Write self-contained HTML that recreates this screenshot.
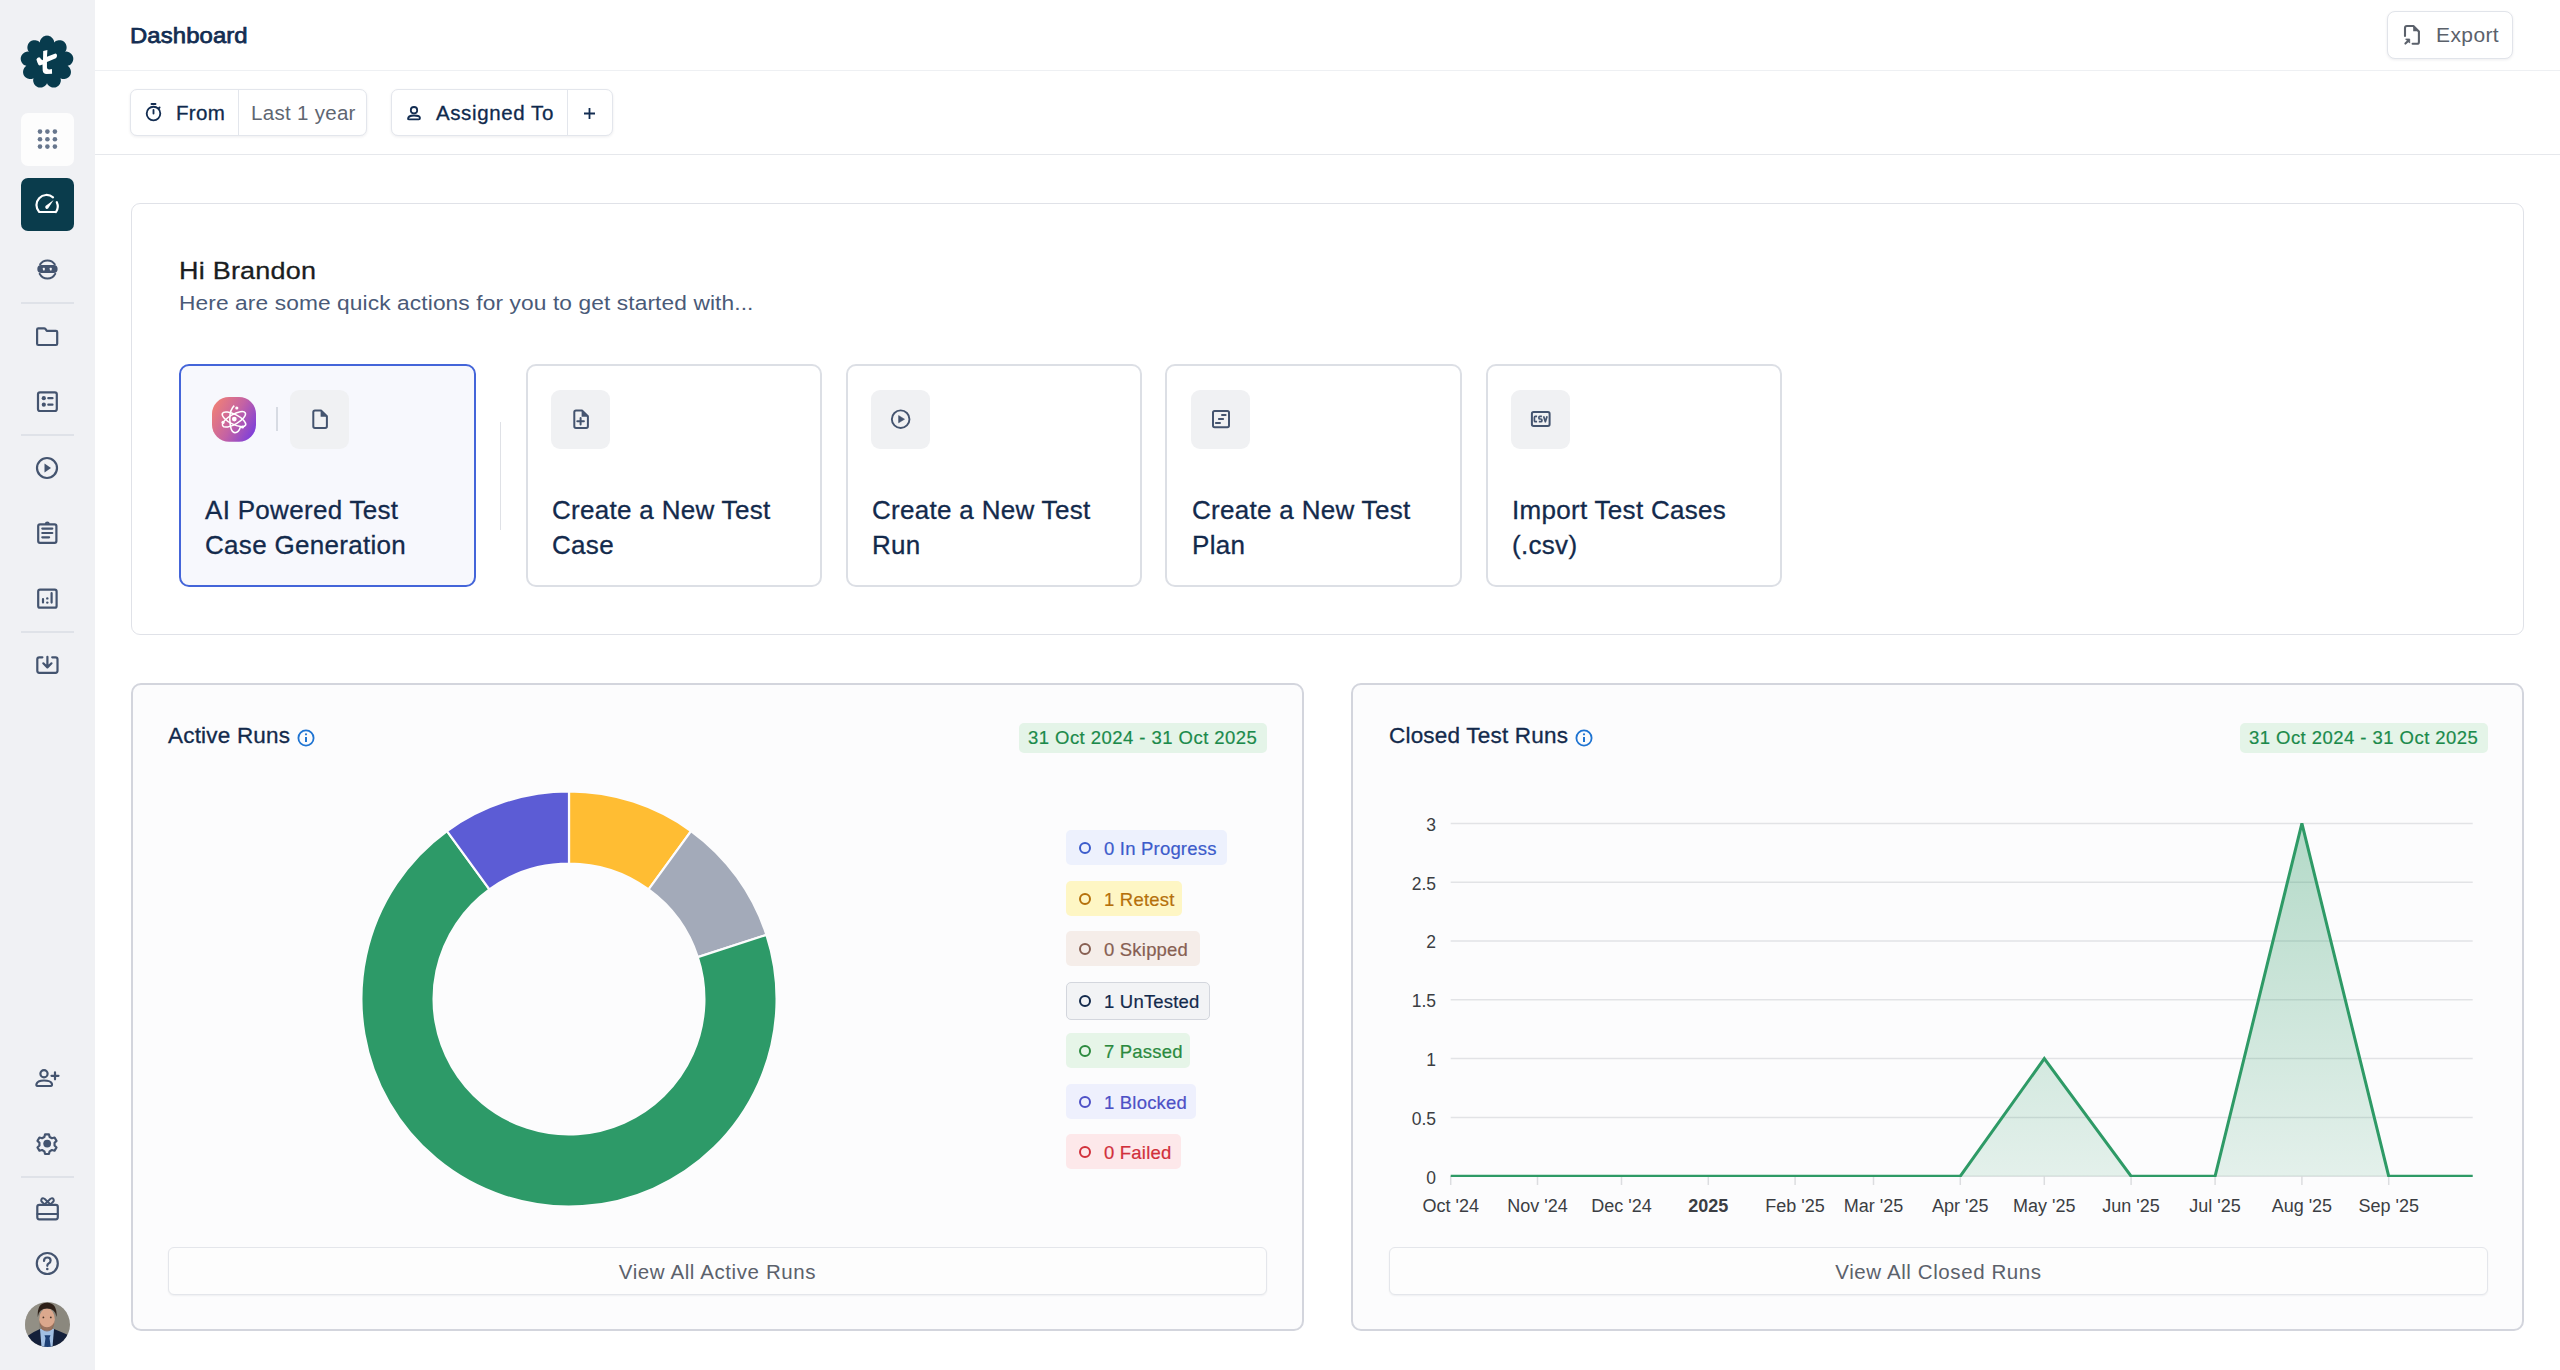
<!DOCTYPE html>
<html><head><meta charset="utf-8">
<style>
*{box-sizing:border-box;margin:0;padding:0}
html,body{width:2560px;height:1370px;overflow:hidden;background:#fff;font-family:"Liberation Sans",sans-serif;}
.abs{position:absolute}
.t{position:absolute;white-space:nowrap;line-height:1}
#side{position:absolute;left:0;top:0;width:95px;height:1370px;background:#f0f1f4}
.sdiv{position:absolute;left:21px;width:53px;height:2px;background:#dfe2e8}
.ico{position:absolute;left:0;width:95px;height:40px}
.hline{position:absolute;left:95px;right:0;height:2px;background:#eef0f3}
.fbox{position:absolute;top:89px;height:47px;border:1px solid #e3e6ec;border-radius:7px;background:#fff;box-shadow:0 1px 3px rgba(20,30,50,.08)}
.card{position:absolute;border:1.8px solid #e0e2e8;border-radius:9px;background:#fdfdfe}
.acard{position:absolute;top:364px;width:296.5px;height:223px;border:2px solid #dcdfe5;border-radius:10px;background:#fff}
.ibox{position:absolute;top:25px;left:24px;width:59px;height:59px;border-radius:9px;background:#f0f1f3}
.atitle{position:absolute;left:24px;top:125px;font-size:26px;line-height:35px;color:#132a4c;letter-spacing:0.3px;-webkit-text-stroke:0.3px #132a4c}
.ccard{position:absolute;top:683px;width:1172px;height:648px;border:2px solid #d3d5dd;border-radius:10px;background:#fcfcfd}
.badge{position:absolute;left:1066px;height:35px;border-radius:5px;font-size:18.5px}
.badge .c{position:absolute;left:13px;top:12px;width:12px;height:12px;border-radius:50%;border:2px solid currentColor}
.badge .tx{position:absolute;left:38px;top:9px;line-height:19px;white-space:nowrap;letter-spacing:0.2px;-webkit-text-stroke:0.2px currentColor}
.vbtn{position:absolute;top:1247px;height:48px;width:1099px;border:1px solid #e4e6eb;border-radius:6px;background:#fdfdfd;box-shadow:0 1px 2px rgba(20,30,50,.06);text-align:center;font-size:20.5px;color:#5b616b;letter-spacing:0.6px}
</style></head>
<body>
<div id="side">
  <svg class="abs" style="left:0;top:0" width="95" height="95" viewBox="0 0 95 95">
    <path fill="#083b4d" d="M47.00,35.60 L47.93,35.66 L48.84,35.86 L49.74,36.18 L50.59,36.62 L51.41,37.19 L52.17,37.88 L52.86,38.70 L53.47,39.65 L53.96,40.77 L54.18,42.47 L55.44,41.31 L56.54,40.77 L57.62,40.43 L58.67,40.25 L59.70,40.21 L60.69,40.30 L61.63,40.51 L62.52,40.84 L63.35,41.28 L64.10,41.82 L64.77,42.47 L65.34,43.20 L65.82,44.02 L66.19,44.92 L66.45,45.88 L66.59,46.89 L66.60,47.96 L66.45,49.08 L66.11,50.26 L65.19,51.70 L66.89,51.62 L68.09,51.92 L69.13,52.35 L70.05,52.89 L70.86,53.51 L71.56,54.22 L72.15,54.99 L72.62,55.81 L72.97,56.68 L73.20,57.58 L73.29,58.50 L73.26,59.44 L73.10,60.37 L72.81,61.30 L72.39,62.20 L71.85,63.07 L71.16,63.89 L70.33,64.65 L69.31,65.34 L67.68,65.85 L69.04,66.88 L69.76,67.88 L70.28,68.88 L70.64,69.88 L70.86,70.89 L70.95,71.88 L70.90,72.84 L70.73,73.78 L70.44,74.67 L70.04,75.50 L69.52,76.27 L68.89,76.97 L68.17,77.58 L67.35,78.10 L66.45,78.52 L65.47,78.83 L64.42,79.03 L63.30,79.08 L62.07,78.94 L60.50,78.29 L60.87,79.95 L60.79,81.18 L60.54,82.28 L60.17,83.28 L59.70,84.19 L59.13,85.00 L58.47,85.72 L57.74,86.32 L56.95,86.82 L56.10,87.20 L55.20,87.45 L54.28,87.58 L53.33,87.59 L52.37,87.46 L51.41,87.21 L50.46,86.82 L49.53,86.29 L48.64,85.60 L47.79,84.71 L47.00,83.20 L46.21,84.71 L45.36,85.60 L44.47,86.29 L43.54,86.82 L42.59,87.21 L41.63,87.46 L40.67,87.59 L39.72,87.58 L38.80,87.45 L37.90,87.20 L37.05,86.82 L36.26,86.32 L35.53,85.72 L34.87,85.00 L34.30,84.19 L33.83,83.28 L33.46,82.28 L33.21,81.18 L33.13,79.95 L33.50,78.29 L31.93,78.94 L30.70,79.08 L29.58,79.03 L28.53,78.83 L27.55,78.52 L26.65,78.10 L25.83,77.58 L25.11,76.97 L24.48,76.27 L23.96,75.50 L23.56,74.67 L23.27,73.78 L23.10,72.84 L23.05,71.88 L23.14,70.89 L23.36,69.88 L23.72,68.88 L24.24,67.88 L24.96,66.88 L26.32,65.85 L24.69,65.34 L23.67,64.65 L22.84,63.89 L22.15,63.07 L21.61,62.20 L21.19,61.30 L20.90,60.37 L20.74,59.44 L20.71,58.50 L20.80,57.58 L21.03,56.68 L21.38,55.81 L21.85,54.99 L22.44,54.22 L23.14,53.51 L23.95,52.89 L24.87,52.35 L25.91,51.92 L27.11,51.62 L28.81,51.70 L27.89,50.26 L27.55,49.08 L27.40,47.96 L27.41,46.89 L27.55,45.88 L27.81,44.92 L28.18,44.02 L28.66,43.20 L29.23,42.47 L29.90,41.82 L30.65,41.28 L31.48,40.84 L32.37,40.51 L33.31,40.30 L34.30,40.21 L35.33,40.25 L36.38,40.43 L37.46,40.77 L38.56,41.31 L39.82,42.47 L40.04,40.77 L40.53,39.65 L41.14,38.70 L41.83,37.88 L42.59,37.19 L43.41,36.62 L44.26,36.18 L45.16,35.86 L46.07,35.66Z"/>
    <path fill="#fff" d="M43.2,51.1 L47.4,50 L46.95,56.7 L55.4,53.6 Q56.8,53.6 57,55.3 Q57.2,57.3 55.8,58.3 L46.95,62.1 L46.95,67.6 Q47.2,69.7 49.2,69.6 L51.9,69.1 L52.1,73.7 L46.5,74 Q43,73.6 42.7,70.5 L42.5,64.6 L39.8,65.6 Q38.2,65.2 37.4,62.5 L36.4,59.6 Q37,57.4 39,57.3 Q40.4,57.5 41,59.2 L43,60.2 Z"/>
  </svg>
  <div class="abs" style="left:21px;top:113px;width:53px;height:53px;border-radius:7px;background:#fdfdfd"></div>
  <svg class="abs" style="left:21px;top:113px" width="53" height="53" viewBox="0 0 53 53"><g fill="#67768d"><circle cx="19" cy="18.6" r="2.3"/><circle cx="26.4" cy="18.6" r="2.3"/><circle cx="33.9" cy="18.6" r="2.3"/><circle cx="19" cy="26.2" r="2.3"/><circle cx="26.4" cy="26.2" r="2.3"/><circle cx="33.9" cy="26.2" r="2.3"/><circle cx="19" cy="33.6" r="2.3"/><circle cx="26.4" cy="33.6" r="2.3"/><circle cx="33.9" cy="33.6" r="2.3"/></g></svg>
  <div class="abs" style="left:21px;top:178px;width:53px;height:53px;border-radius:7px;background:#0a3c4c"></div>
  <svg class="abs" style="left:21px;top:178px" width="53" height="53" viewBox="0 0 53 53"><path d="M35,34 L18.2,34 A10.1,10.1 0 0 1 32,19.3 M35.8,24.2 A10.1,10.1 0 0 1 35,34" fill="none" stroke="#fff" stroke-width="2.2" stroke-linecap="round" stroke-linejoin="round"/><path d="M32.6,22 L27.1,30.5 A1.8,1.8 0 0 1 24.5,28.1 Z" fill="#fff"/></svg>
  <!-- bot -->
  <svg class="ico" style="top:249px" width="95" height="40" viewBox="0 0 95 40"><g fill="none" stroke="#44546f" stroke-width="1.9" stroke-linecap="round"><path d="M40.09,15.4 A8.9,8.9 0 0 1 54.81,15.4 M55.3,24.8 A8.9,8.9 0 0 1 39.6,24.8"/></g>
    <rect x="37.3" y="16.1" width="20.3" height="8" rx="4" fill="#44546f"/>
    <g fill="#f0f1f4"><rect x="42.9" y="18.7" width="1.9" height="2.7" rx="0.6"/><rect x="49.8" y="18.7" width="1.9" height="2.7" rx="0.6"/></g></svg>
  <div class="sdiv" style="top:302px"></div>
  <!-- folder -->
  <svg class="ico" style="top:316px" width="95" height="40" viewBox="0 0 95 40"><path d="M39,12.4 h5 q1,0 1.6,0.8 l1.2,1.7 h9.2 q1.2,0 1.2,1.2 v11.7 q0,1.2 -1.2,1.2 h-17.7 q-1.2,0 -1.2,-1.2 v-14.2 q0,-1.2 1.2,-1.2 Z" fill="none" stroke="#44546f" stroke-width="2.2" stroke-linejoin="round"/></svg>
  <!-- list -->
  <svg class="ico" style="top:381px" width="95" height="40" viewBox="0 0 95 40"><g fill="none" stroke="#44546f" stroke-width="2.2" stroke-linecap="round"><rect x="38" y="11.3" width="18.8" height="18.7" rx="2"/><path d="M48.3,17.2 h4.2 M48.3,23.7 h4.2"/></g><g fill="#44546f"><circle cx="43.8" cy="17.2" r="2.1"/><circle cx="43.8" cy="23.7" r="2.1"/></g></svg>
  <div class="sdiv" style="top:434px"></div>
  <!-- play -->
  <svg class="ico" style="top:448px" width="95" height="40" viewBox="0 0 95 40"><circle cx="47" cy="20" r="10" fill="none" stroke="#44546f" stroke-width="2.2"/><path d="M44.5,15.5 L51,20 L44.5,24.5 Z" fill="#44546f"/></svg>
  <!-- clipboard -->
  <svg class="ico" style="top:512px" width="95" height="40" viewBox="0 0 95 40"><g fill="none" stroke="#44546f" stroke-width="2.2" stroke-linecap="round" stroke-linejoin="round"><rect x="38.2" y="12.3" width="18.2" height="18.6" rx="1.8"/><path d="M46,11.8 a1.3,1.3 0 0 1 2.6,0 M42.3,16.6 h10 M42.3,21 h10 M42.3,25.3 h6.8"/></g></svg>
  <!-- chart -->
  <svg class="ico" style="top:578px" width="95" height="40" viewBox="0 0 95 40"><g fill="none" stroke="#44546f" stroke-width="2.2" stroke-linecap="round"><rect x="38.2" y="11.7" width="18.4" height="18" rx="1.8"/><path d="M43,21.2 v3.2 M51.6,15.2 v9.4"/></g><g fill="#44546f"><circle cx="47.3" cy="20.4" r="1.2"/><circle cx="47.3" cy="24.6" r="1.2"/></g></svg>
  <div class="sdiv" style="top:631px"></div>
  <!-- download -->
  <svg class="ico" style="top:645px" width="95" height="40" viewBox="0 0 95 40"><g fill="none" stroke="#44546f" stroke-width="2.2" stroke-linecap="round" stroke-linejoin="round"><path d="M42.4,12.3 h-3.1 q-2,0 -2,2 v11.5 q0,2 2,2 h16.2 q2,0 2,-2 v-11.5 q0,-2 -2,-2 h-3.3"/><path d="M47.4,11.8 v10.5 M43.3,18.3 l4.1,4.1 l4.1,-4.1"/></g></svg>
  <!-- user plus -->
  <svg class="ico" style="top:1059px" width="95" height="40" viewBox="0 0 95 40"><g fill="none" stroke="#44546f" stroke-width="2.2" stroke-linecap="round" stroke-linejoin="round"><circle cx="44" cy="14.8" r="3.6"/><path d="M37.5,27 Q36,27 36.5,25 Q37.5,21.5 44,21.5 Q50.5,21.5 51.8,24.5 Q52.5,27 50.7,27 Z"/><path d="M55,13.3 v7 M51.5,16.8 h7"/></g></svg>
  <!-- gear -->
  <svg class="ico" style="top:1124px" width="95" height="40" viewBox="0 0 95 40"><g fill="none" stroke="#44546f" stroke-width="2.2" stroke-linejoin="round"><path transform="translate(47 20.5) scale(0.88) translate(-47 -20.5) translate(0 -0.6)" stroke-width="2.5" id="gearp" d="M44.8,9.5 h4.4 l0.8,3 l2.6,1.5 l3,-0.8 l2.2,3.8 l-2.2,2.2 v3 l2.2,2.2 l-2.2,3.8 l-3,-0.8 l-2.6,1.5 l-0.8,3 h-4.4 l-0.8,-3 l-2.6,-1.5 l-3,0.8 l-2.2,-3.8 l2.2,-2.2 v-3 l-2.2,-2.2 l2.2,-3.8 l3,0.8 l2.6,-1.5 Z"/></g><circle cx="47.2" cy="19.6" r="3.9" fill="#44546f"/></svg>
  <div class="sdiv" style="top:1176px"></div>
  <!-- gift -->
  <svg class="ico" style="top:1190px" width="95" height="40" viewBox="0 0 95 40"><g fill="none" stroke="#44546f" stroke-width="2.2" stroke-linecap="round" stroke-linejoin="round"><rect x="37.3" y="14.8" width="20.5" height="14.5" rx="2"/><path d="M37.5,24 h20"/></g><g fill="none" stroke="#44546f" stroke-width="1.9" stroke-linecap="round" stroke-linejoin="round"><path d="M44.5,14.5 L50.5,8.8 Q52.5,7.6 53.6,9.3 Q54.4,11.2 52.2,12.6 L50.5,14.5 M50.5,14.5 L44.5,8.8 Q42.5,7.6 41.4,9.3 Q40.6,11.2 42.8,12.6 L44.5,14.5"/></g></svg>
  <!-- help -->
  <svg class="ico" style="top:1243px" width="95" height="40" viewBox="0 0 95 40"><g fill="none" stroke="#44546f" stroke-width="2.2" stroke-linecap="round"><circle cx="47.3" cy="20.5" r="10.5"/><path d="M44,18 q0,-3.5 3.3,-3.5 q3.3,0 3.3,3 q0,2 -2,3 q-1.3,0.7 -1.3,2.3"/></g><circle cx="47.3" cy="26" r="1.3" fill="#44546f"/></svg>
  <!-- avatar -->
  <svg class="abs" style="left:25px;top:1302px" width="45" height="45" viewBox="0 0 45 45">
    <defs><clipPath id="avc"><circle cx="22.5" cy="22.5" r="22.5"/></clipPath></defs>
    <g clip-path="url(#avc)">
      <rect width="45" height="45" fill="#8b887e"/>
      <rect x="0" y="0" width="14" height="45" fill="#98958b" opacity="0.6"/>
      <path d="M0,45 L0,35 L3.2,33.5 Q10,29 15,27 L29,27 Q35,29.5 42,32.4 L45,34 L45,45 Z" fill="#14203a"/>
      <path d="M15,27 L29,27 L27.5,45 L16.5,45 Z" fill="#a2bfe2"/>
      <path d="M19.5,33.3 L25.5,33.3 L24.5,36 L25.8,45 L19.2,45 L20.5,36 Z" fill="#1d3f74"/>
      <rect x="17" y="23" width="10" height="5" fill="#c4927a"/>
      <ellipse cx="22" cy="17.3" rx="7.8" ry="11" fill="#dba88d"/>
      <path d="M14.4,18.5 Q14.8,29.3 22,29.5 Q29.2,29.3 29.6,18.5 Q28.3,24.8 22,25.2 Q15.7,24.8 14.4,18.5 Z" fill="#86624f" opacity="0.75"/>
      <path d="M12.8,15 Q11.8,0.6 22,0.7 Q32.2,0.6 31.6,15 Q30.5,6.8 22,6.6 Q13.6,6.8 12.8,15 Z" fill="#2e2018"/>
      <circle cx="18.4" cy="15.4" r="0.9" fill="#4a352a"/><circle cx="25.8" cy="15.4" r="0.9" fill="#4a352a"/>
    </g>
  </svg>
</div>

<!-- header -->
<div class="t" style="left:129.8px;top:24.5px;font-size:22px;color:#132d52;-webkit-text-stroke:0.75px #132d52;transform:scaleX(1.085);transform-origin:0 0;letter-spacing:0.1px">Dashboard</div>
<div class="hline" style="top:69.5px;height:1.5px"></div>
<div class="abs" style="left:2387px;top:11px;width:126px;height:48px;border:1px solid #e1e4ea;border-radius:8px;background:#fff;box-shadow:0 1px 3px rgba(20,30,50,.08)"></div>
<svg class="abs" style="left:2400px;top:20px" width="26" height="30" viewBox="0 0 26 30"><g fill="none" stroke="#5b616b" stroke-width="2.1" stroke-linejoin="round" stroke-linecap="round"><path d="M5,16 V7.9 q0,-1.9 1.9,-1.9 h6.5 l5.5,5.5 v10.4 q0,1.9 -1.9,1.9 h-4.4"/><path d="M5.4,23.6 L8.6,20.4"/></g><path d="M13.2,6 v5.3 h5.5 Z" fill="#5b616b"/><path d="M5.6,19 h4.1 v4.1 Z" fill="#5b616b" stroke="#5b616b" stroke-width="0.8" stroke-linejoin="round"/></svg>
<div class="t" style="left:2436px;top:23.5px;font-size:21px;color:#5b616b;letter-spacing:0.4px">Export</div>

<!-- filters -->
<div class="fbox" style="left:130px;width:237px"></div>
<div class="abs" style="left:238px;top:90px;width:1px;height:45px;background:#e3e6ec"></div>
<svg class="abs" style="left:143px;top:100px" width="22" height="24" viewBox="0 0 22 24"><g fill="none" stroke="#132d52" stroke-width="1.85" stroke-linecap="round"><circle cx="10.5" cy="13.5" r="6.8"/><path d="M10.5,10 v3.5 M8.5,4 h4 M15.3,8.7 L16.6,7.5"/></g></svg>
<div class="t" style="left:176px;top:103px;font-size:20.5px;color:#0f2a4d;letter-spacing:0.3px;-webkit-text-stroke:0.3px #0f2a4d">From</div>
<div class="t" style="left:251px;top:103px;font-size:20.5px;color:#5f6671;letter-spacing:0.3px">Last 1 year</div>
<div class="fbox" style="left:391px;width:222px"></div>
<div class="abs" style="left:567px;top:90px;width:1px;height:45px;background:#e3e6ec"></div>
<svg class="abs" style="left:403px;top:102px" width="22" height="22" viewBox="0 0 22 22"><g fill="none" stroke="#132d52" stroke-width="1.8"><circle cx="11" cy="8.2" r="3.2"/><path d="M5,17 Q5,13.5 11,13.5 Q17,13.5 17,16 Q17,17.3 15.7,17.3 H6.3 Q5,17.3 5,17 Z"/></g></svg>
<div class="t" style="left:436px;top:103px;font-size:20.5px;color:#0f2a4d;letter-spacing:0.6px;-webkit-text-stroke:0.3px #0f2a4d">Assigned To</div>
<svg class="abs" style="left:581px;top:105px" width="17" height="17" viewBox="0 0 17 17"><path d="M8.5,3 v11 M3,8.5 h11" stroke="#132d52" stroke-width="1.8"/></svg>
<div class="hline" style="top:153.8px;height:1.5px;background:#e6e8ec"></div>

<!-- welcome card -->
<div class="card" style="left:131px;top:202.8px;width:2393px;height:432px;background:#fff"></div>
<div class="t" style="left:178.5px;top:259px;font-size:24.5px;color:#1a1d21;letter-spacing:0.2px;transform:scaleX(1.102);transform-origin:0 0;-webkit-text-stroke:0.3px #1a1d21">Hi Brandon</div>
<div class="t" style="left:178.5px;top:292.5px;font-size:20.5px;color:#4a5a78;letter-spacing:0.1px;transform:scaleX(1.108);transform-origin:0 0">Here are some quick actions for you to get started with...</div>


<!-- action cards -->
<div class="acard" style="left:179px;width:297px;background:#f7f8fd;border:2.2px solid #4465d9"></div>
<svg class="abs" style="left:211px;top:396px" width="46" height="47" viewBox="0 0 46 47">
  <defs><linearGradient id="aig" x1="0" y1="0.25" x2="1" y2="0.8"><stop offset="0" stop-color="#ee7f78"/><stop offset="0.5" stop-color="#c462a4"/><stop offset="1" stop-color="#7a3ddd"/></linearGradient></defs>
  <rect x="1" y="1" width="44" height="44.7" rx="17" fill="url(#aig)"/>
  <g fill="none" stroke="#fff" stroke-width="1.5">
    <ellipse cx="23" cy="23.3" rx="13" ry="4.9" transform="rotate(27 23 23.3)"/>
    <ellipse cx="23" cy="23.3" rx="13" ry="4.9" transform="rotate(-30 23 23.3)"/>
    <path d="M23.3,9.6 Q18.6,13.5 18.8,23.5 Q19.3,36.6 24,36.8 Q27.8,36.6 29.6,30.5"/>
  </g>
  <circle cx="23.3" cy="23.1" r="2.4" fill="#fff"/>
  <circle cx="25.8" cy="12" r="1.6" fill="#fff"/><circle cx="12" cy="26.4" r="1.6" fill="#fff"/><circle cx="31.5" cy="31" r="1.6" fill="#fff"/>
</svg>
<div class="abs" style="left:276px;top:407px;width:1.5px;height:24px;background:#d7dbe3"></div>
<div class="abs" style="left:290px;top:390px;width:59px;height:59px;border-radius:9px;background:#f0f1f3"></div>
<svg class="abs" style="left:306px;top:405px" width="28" height="28" viewBox="0 0 28 28"><path d="M9,5.4 h6 l5.9,5.9 v10 q0,1.7 -1.7,1.7 h-10.2 q-1.7,0 -1.7,-1.7 v-14.2 q0,-1.7 1.7,-1.7 Z" fill="none" stroke="#44546f" stroke-width="2" stroke-linejoin="round"/><path d="M14.6,5.4 v6.3 h6.3 Z" fill="#44546f"/></svg>
<div class="atitle" style="left:205px;top:492.8px">AI Powered Test<br>Case Generation</div>
<div class="abs" style="left:500px;top:421.5px;width:1.2px;height:108.5px;background:#dfe1e6"></div>

<div class="acard" style="left:525.8px"></div>
<div class="abs" style="left:551px;top:390px;width:59px;height:59px;border-radius:9px;background:#f0f1f3"></div>
<svg class="abs" style="left:567px;top:405px" width="28" height="28" viewBox="0 0 28 28"><g fill="none" stroke="#44546f" stroke-width="2" stroke-linejoin="round"><path d="M9,5.4 h6 l5.9,5.9 v10 q0,1.7 -1.7,1.7 h-10.2 q-1.7,0 -1.7,-1.7 v-14.2 q0,-1.7 1.7,-1.7 Z"/><path d="M13.6,13 v6.6 M10.3,16.3 h6.6" stroke-linecap="round"/></g><path d="M14.6,5.4 v6.3 h6.3 Z" fill="#44546f"/></svg>
<div class="atitle" style="left:552px;top:492.8px">Create a New Test<br>Case</div>

<div class="acard" style="left:845.5px"></div>
<div class="abs" style="left:871px;top:390px;width:59px;height:59px;border-radius:9px;background:#f0f1f3"></div>
<svg class="abs" style="left:886px;top:405px" width="28" height="28" viewBox="0 0 28 28"><circle cx="14.66" cy="14.2" r="8.8" fill="none" stroke="#44546f" stroke-width="1.9"/><path d="M12.6,10.6 L18.5,14.2 L12.6,17.8 Z" fill="#44546f" stroke="#44546f" stroke-width="0.6" stroke-linejoin="round"/></svg>
<div class="atitle" style="left:872px;top:492.8px">Create a New Test<br>Run</div>

<div class="acard" style="left:1165.3px"></div>
<div class="abs" style="left:1191px;top:390px;width:59px;height:59px;border-radius:9px;background:#f0f1f3"></div>
<svg class="abs" style="left:1206px;top:405px" width="28" height="28" viewBox="0 0 28 28"><g fill="none" stroke="#44546f" stroke-width="2" stroke-linecap="round"><rect x="7" y="6" width="16" height="16.2" rx="1.6"/><path d="M16,10.1 h3.6 M12.9,14.1 h4.2 M9.9,18 h4.1"/></g></svg>
<div class="atitle" style="left:1192px;top:492.8px">Create a New Test<br>Plan</div>

<div class="acard" style="left:1485.5px"></div>
<div class="abs" style="left:1511px;top:390px;width:59px;height:59px;border-radius:9px;background:#f0f1f3"></div>
<svg class="abs" style="left:1526px;top:405px" width="28" height="28" viewBox="0 0 28 28"><g fill="none" stroke="#44546f" stroke-linejoin="round"><rect x="5.9" y="7.1" width="17.7" height="13.8" rx="1.7" stroke-width="2"/><path stroke-width="1.7" d="M11.1,11.4 h-1.7 q-1,0 -1,1 v3.3 q0,1 1,1 h1.7 M15.9,11.4 h-2 q-1,0 -1,1 v0.6 q0,1 1,1 h1 q1,0 1,1 v0.7 q0,1 -1,1 h-2.1 M17.6,11.3 l1.75,5.5 l1.75,-5.5"/></g></svg>
<div class="atitle" style="left:1512px;top:492.8px">Import Test Cases<br>(.csv)</div>


<!-- chart cards -->
<div class="ccard" style="left:131px;width:1173px"></div>
<div class="t" style="left:168px;top:725px;font-size:22.5px;color:#132a4c;letter-spacing:0.2px;-webkit-text-stroke:0.3px #132a4c">Active Runs</div>
<svg class="abs" style="left:296px;top:727.7px" width="20" height="20" viewBox="0 0 20 20"><circle cx="10" cy="10" r="7.6" fill="none" stroke="#1f74d2" stroke-width="1.8"/><path d="M10,9 v5" stroke="#1f74d2" stroke-width="2"/><circle cx="10" cy="6.3" r="1.1" fill="#1f74d2"/></svg>
<div class="abs" style="left:1019px;top:723px;width:248px;height:30px;border-radius:5px;background:#e4f4e8"></div>
<div class="t" style="left:1028px;top:729px;font-size:18.5px;color:#1b8a4b;letter-spacing:0.45px;-webkit-text-stroke:0.2px #1b8a4b">31 Oct 2024 - 31 Oct 2025</div>
<svg class="abs" style="left:0;top:0" width="1300" height="1370" viewBox="0 0 1300 1370"><path d="M569.00,791.40 A207.6,207.6 0 0 1 691.02,831.05 L648.59,889.46 A135.4,135.4 0 0 0 569.00,863.60 Z" fill="#ffbd33" stroke="#fcfcfd" stroke-width="2.2" stroke-linejoin="miter"/><path d="M691.02,831.05 A207.6,207.6 0 0 1 766.44,934.85 L697.77,957.16 A135.4,135.4 0 0 0 648.59,889.46 Z" fill="#a3aab9" stroke="#fcfcfd" stroke-width="2.2" stroke-linejoin="miter"/><path d="M766.44,934.85 A207.6,207.6 0 1 1 446.98,831.05 L489.41,889.46 A135.4,135.4 0 1 0 697.77,957.16 Z" fill="#2d9a68" stroke="#fcfcfd" stroke-width="2.2" stroke-linejoin="miter"/><path d="M446.98,831.05 A207.6,207.6 0 0 1 569.00,791.40 L569.00,863.60 A135.4,135.4 0 0 0 489.41,889.46 Z" fill="#5c5cd5" stroke="#fcfcfd" stroke-width="2.2" stroke-linejoin="miter"/></svg>
<div class="badge" style="top:830px;width:161px;background:#edf1fd;color:#3c5ccb"><span class="c"></span><span class="tx">0 In Progress</span></div>
<div class="badge" style="top:881px;width:116px;background:#fef6c4;color:#b5700b"><span class="c"></span><span class="tx">1 Retest</span></div>
<div class="badge" style="top:931px;width:134px;background:#f5ede9;color:#875f52"><span class="c"></span><span class="tx">0 Skipped</span></div>
<div class="badge" style="top:982px;width:144px;height:38px;background:#f2f3f5;color:#132a4c;border:1.5px solid #d3d6dd"><span class="c" style="left:12px;top:12px"></span><span class="tx" style="left:37px;top:8.5px">1 UnTested</span></div>
<div class="badge" style="top:1033px;width:124px;background:#e6f5e8;color:#2b8a3e"><span class="c"></span><span class="tx">7 Passed</span></div>
<div class="badge" style="top:1084px;width:130px;background:#eef0fd;color:#4d50c6"><span class="c"></span><span class="tx">1 Blocked</span></div>
<div class="badge" style="top:1134px;width:115px;background:#fde8ea;color:#d1303b"><span class="c"></span><span class="tx">0 Failed</span></div>
<div class="vbtn" style="left:168px"><span style="position:absolute;left:0;right:0;top:14px;line-height:20px">View All Active Runs</span></div>

<div class="ccard" style="left:1351px;width:1173px"></div>
<div class="t" style="left:1389px;top:725px;font-size:22.5px;color:#132a4c;letter-spacing:0.2px;-webkit-text-stroke:0.3px #132a4c">Closed Test Runs</div>
<svg class="abs" style="left:1574px;top:727.7px" width="20" height="20" viewBox="0 0 20 20"><circle cx="10" cy="10" r="7.6" fill="none" stroke="#1f74d2" stroke-width="1.8"/><path d="M10,9 v5" stroke="#1f74d2" stroke-width="2"/><circle cx="10" cy="6.3" r="1.1" fill="#1f74d2"/></svg>
<div class="abs" style="left:2240px;top:723px;width:248px;height:30px;border-radius:5px;background:#e4f4e8"></div>
<div class="t" style="left:2249px;top:729px;font-size:18.5px;color:#1b8a4b;letter-spacing:0.45px;-webkit-text-stroke:0.2px #1b8a4b">31 Oct 2024 - 31 Oct 2025</div>
<svg class="abs" style="left:0;top:0" width="2560" height="1370" viewBox="0 0 2560 1370" font-family="Liberation Sans" font-size="18" fill="#3b3e43">
  <defs><clipPath id="lc"><rect x="1400" y="780" width="1100" height="396.9"/></clipPath><linearGradient id="ag" x1="0" y1="823.4" x2="0" y2="1176.2" gradientUnits="userSpaceOnUse"><stop offset="0" stop-color="#2e9a66" stop-opacity="0.35"/><stop offset="1" stop-color="#2e9a66" stop-opacity="0.12"/></linearGradient></defs>
  <line x1="1450.7" x2="2472.7" y1="1176.2" y2="1176.2" stroke="#e2e3e6" stroke-width="1.5"/><line x1="1450.7" x2="2472.7" y1="1117.4" y2="1117.4" stroke="#e2e3e6" stroke-width="1.5"/><line x1="1450.7" x2="2472.7" y1="1058.6" y2="1058.6" stroke="#e2e3e6" stroke-width="1.5"/><line x1="1450.7" x2="2472.7" y1="999.8" y2="999.8" stroke="#e2e3e6" stroke-width="1.5"/><line x1="1450.7" x2="2472.7" y1="941.0" y2="941.0" stroke="#e2e3e6" stroke-width="1.5"/><line x1="1450.7" x2="2472.7" y1="882.2" y2="882.2" stroke="#e2e3e6" stroke-width="1.5"/><line x1="1450.7" x2="2472.7" y1="823.4" y2="823.4" stroke="#e2e3e6" stroke-width="1.5"/><line x1="1450.7" x2="1450.7" y1="1176" y2="1185" stroke="#dcdde0" stroke-width="1.5"/><line x1="1537.5" x2="1537.5" y1="1176" y2="1185" stroke="#dcdde0" stroke-width="1.5"/><line x1="1621.5" x2="1621.5" y1="1176" y2="1185" stroke="#dcdde0" stroke-width="1.5"/><line x1="1708.3" x2="1708.3" y1="1176" y2="1185" stroke="#dcdde0" stroke-width="1.5"/><line x1="1795.1" x2="1795.1" y1="1176" y2="1185" stroke="#dcdde0" stroke-width="1.5"/><line x1="1873.5" x2="1873.5" y1="1176" y2="1185" stroke="#dcdde0" stroke-width="1.5"/><line x1="1960.3" x2="1960.3" y1="1176" y2="1185" stroke="#dcdde0" stroke-width="1.5"/><line x1="2044.3" x2="2044.3" y1="1176" y2="1185" stroke="#dcdde0" stroke-width="1.5"/><line x1="2131.1" x2="2131.1" y1="1176" y2="1185" stroke="#dcdde0" stroke-width="1.5"/><line x1="2215.1" x2="2215.1" y1="1176" y2="1185" stroke="#dcdde0" stroke-width="1.5"/><line x1="2301.9" x2="2301.9" y1="1176" y2="1185" stroke="#dcdde0" stroke-width="1.5"/><line x1="2388.7" x2="2388.7" y1="1176" y2="1185" stroke="#dcdde0" stroke-width="1.5"/>
  <path clip-path="url(#lc)" d="M1450.7,1176.2 L1537.5,1176.2 L1621.5,1176.2 L1708.3,1176.2 L1795.1,1176.2 L1873.5,1176.2 L1960.3,1176.2 L2044.3,1058.6 L2131.1,1176.2 L2215.1,1176.2 L2301.9,823.4 L2388.7,1176.2 L2472.7,1176.2 L2472.7,1176.2 L1450.7,1176.2 Z" fill="url(#ag)"/>
  <path clip-path="url(#lc)" d="M1450.7,1176.2 L1537.5,1176.2 L1621.5,1176.2 L1708.3,1176.2 L1795.1,1176.2 L1873.5,1176.2 L1960.3,1176.2 L2044.3,1058.6 L2131.1,1176.2 L2215.1,1176.2 L2301.9,823.4 L2388.7,1176.2 L2472.7,1176.2" fill="none" stroke="#2e9a66" stroke-width="3" stroke-linejoin="miter"/>
  <text x="1436" y="1183.5" text-anchor="end" font-size="17.5">0</text><text x="1436" y="1124.7" text-anchor="end" font-size="17.5">0.5</text><text x="1436" y="1065.9" text-anchor="end" font-size="17.5">1</text><text x="1436" y="1007.1" text-anchor="end" font-size="17.5">1.5</text><text x="1436" y="948.3" text-anchor="end" font-size="17.5">2</text><text x="1436" y="889.5" text-anchor="end" font-size="17.5">2.5</text><text x="1436" y="830.7" text-anchor="end" font-size="17.5">3</text><text x="1450.7" y="1212" text-anchor="middle">Oct &#39;24</text><text x="1537.5" y="1212" text-anchor="middle">Nov &#39;24</text><text x="1621.5" y="1212" text-anchor="middle">Dec &#39;24</text><text x="1708.3" y="1212" text-anchor="middle" font-weight="700">2025</text><text x="1795.1" y="1212" text-anchor="middle">Feb &#39;25</text><text x="1873.5" y="1212" text-anchor="middle">Mar &#39;25</text><text x="1960.3" y="1212" text-anchor="middle">Apr &#39;25</text><text x="2044.3" y="1212" text-anchor="middle">May &#39;25</text><text x="2131.1" y="1212" text-anchor="middle">Jun &#39;25</text><text x="2215.1" y="1212" text-anchor="middle">Jul &#39;25</text><text x="2301.9" y="1212" text-anchor="middle">Aug &#39;25</text><text x="2388.7" y="1212" text-anchor="middle">Sep &#39;25</text>
</svg>
<div class="vbtn" style="left:1389px"><span style="position:absolute;left:0;right:0;top:14px;line-height:20px">View All Closed Runs</span></div>

</body></html>
